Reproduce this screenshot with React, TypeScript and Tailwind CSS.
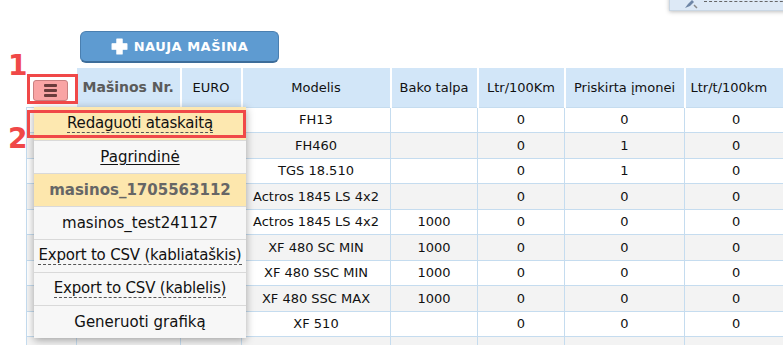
import React from "react";

type Row = {
  model: string;
  tank: string;
  ltr: string;
  company: string;
  ltrT: string;
};

const rows: Row[] = [
  { model: "FH13", tank: "", ltr: "0", company: "0", ltrT: "0" },
  { model: "FH460", tank: "", ltr: "0", company: "1", ltrT: "0" },
  { model: "TGS 18.510", tank: "", ltr: "0", company: "1", ltrT: "0" },
  { model: "Actros 1845 LS 4x2", tank: "", ltr: "0", company: "0", ltrT: "0" },
  { model: "Actros 1845 LS 4x2", tank: "1000", ltr: "0", company: "0", ltrT: "0" },
  { model: "XF 480 SC MIN", tank: "1000", ltr: "0", company: "0", ltrT: "0" },
  { model: "XF 480 SSC MIN", tank: "1000", ltr: "0", company: "0", ltrT: "0" },
  { model: "XF 480 SSC MAX", tank: "1000", ltr: "0", company: "0", ltrT: "0" },
  { model: "XF 510", tank: "", ltr: "0", company: "0", ltrT: "0" },
  { model: "", tank: "", ltr: "", company: "", ltrT: "" },
];

const menuItems = [
  { label: "Redaguoti ataskaitą", kind: "dotted", bg: "bg-[#fde8b0]" },
  { label: "Pagrindinė", kind: "solid", bg: "bg-[#f7f7f7]" },
  { label: "masinos_1705563112", kind: "bold", bg: "bg-[#fde7ad]" },
  { label: "masinos_test241127", kind: "plain", bg: "bg-[#f7f7f7]" },
  { label: "Export to CSV (kabliataškis)", kind: "dotted", bg: "bg-[#f7f7f7]" },
  { label: "Export to CSV (kablelis)", kind: "dotted", bg: "bg-[#f7f7f7]" },
  { label: "Generuoti grafiką", kind: "plain", bg: "bg-[#f7f7f7]" },
];

const App = () => {
  return (
    <div className="relative w-[783px] h-[345px] overflow-hidden bg-white font-['DejaVu_Sans',sans-serif] text-[13px] text-[#111]">
      {/* top right floating panel */}
      <div className="absolute left-[669px] top-[-4px] w-[130px] h-[15px] bg-[#dde9f6] border border-[#c9d6e3] shadow-[0_1px_4px_rgba(0,0,0,0.25)] flex items-center pl-[14px] gap-[6px]">
        <svg width="14" height="10" viewBox="0 0 14 10">
          <path d="M1 9 L4 5 L8 1 L10 3 L6 7 Z" fill="#6f86a6" />
          <path d="M10 6 L13 9" stroke="#8a8a8a" strokeWidth="1.5" />
        </svg>
        <div className="flex-1 border-t border-dashed border-[#666] mt-[-4px]" />
      </div>

      <div className="pt-[31px] pl-[26px]">
        <div className="pl-[54px] h-[37px]">
          <button className="w-[199px] h-[32px] rounded-[6px] bg-[#5e9bd1] border border-[#4a7fb0] border-b-[2px] border-b-[#3d6d9a] flex items-center justify-center gap-[6px] text-white font-bold text-[13px] tracking-[0.5px]">
            <svg width="17" height="17" viewBox="0 0 16 16">
              <path d="M5.5 1h5v4.5H15v5h-4.5V15h-5v-4.5H1v-5h4.5z" fill="#fff" stroke="#fff" strokeLinejoin="round" strokeWidth="1" />
            </svg>
            NAUJA MAŠINA
          </button>
        </div>

        <table className="border-collapse table-fixed w-[800px]">
          <colgroup>
            <col className="w-[50px]" />
            <col className="w-[104px]" />
            <col className="w-[61px]" />
            <col className="w-[149px]" />
            <col className="w-[87px]" />
            <col className="w-[87px]" />
            <col className="w-[120px]" />
            <col className="w-[142px]" />
          </colgroup>
          <thead>
            <tr className="h-[39px]">
              <th className="bg-white"></th>
              <th className="bg-[#d2e6f8] border-r-2 border-white font-bold text-[14px] text-[#5b5b5b] text-left pl-[6px] whitespace-nowrap">Mašinos Nr.</th>
              <th className="bg-[#d2e6f8] border-r-2 border-white font-normal">EURO</th>
              <th className="bg-[#d2e6f8] border-r-2 border-white font-normal">Modelis</th>
              <th className="bg-[#d2e6f8] border-r-2 border-white font-normal">Bako talpa</th>
              <th className="bg-[#d2e6f8] border-r-2 border-white font-normal">Ltr/100Km</th>
              <th className="bg-[#d2e6f8] border-r-2 border-white font-normal whitespace-nowrap">Priskirta įmonei</th>
              <th className="bg-[#d2e6f8] font-normal text-left pl-[5px]">Ltr/t/100km</th>
            </tr>
          </thead>
          <tbody>
            {rows.map((r, i) => (
              <tr key={i} className={`h-[25.5px] ${i % 2 === 1 ? "bg-[#f3f3f3]" : "bg-white"}`}>
                <td className="border border-[#c5dcef]"></td>
                <td className="border border-[#c5dcef]"></td>
                <td className="border border-[#c5dcef]"></td>
                <td className="border border-[#c5dcef] text-center whitespace-nowrap px-0">{r.model}</td>
                <td className="border border-[#c5dcef] text-center">{r.tank}</td>
                <td className="border border-[#c5dcef] text-center">{r.ltr}</td>
                <td className="border border-[#c5dcef] text-center">{r.company}</td>
                <td className="border border-[#c5dcef] text-left pl-[47px]">{r.ltrT}</td>
              </tr>
            ))}
          </tbody>
        </table>
      </div>

      {/* hamburger toggle */}
      <button className="absolute left-[33px] top-[80px] w-[35px] h-[21px] rounded-[3px] bg-[#f9a4a4] border border-[#c98080] flex flex-col items-center justify-center gap-[2px]">
        <span className="block w-[13px] h-[3px] rounded-[1px] bg-[#6a3b3b]" />
        <span className="block w-[13px] h-[3px] rounded-[1px] bg-[#6a3b3b]" />
        <span className="block w-[13px] h-[3px] rounded-[1px] bg-[#6a3b3b]" />
      </button>

      {/* dropdown menu */}
      <div className="absolute left-[34px] top-[107px] w-[212px] bg-[#f7f7f7] rounded-b-[3px] shadow-[0_2px_8px_rgba(0,0,0,0.35)] flex flex-col">
        {menuItems.map((m, i) => (
          <div
            key={i}
            className={`h-[33px] flex items-center justify-center whitespace-nowrap text-[15px] ${m.bg} ${i > 0 ? "border-t border-[#d9d9d9]" : ""}`}
          >
            <span
              className={
                m.kind === "dotted"
                  ? "border-b border-dashed border-[#555] leading-[17px] tracking-[-0.2px]"
                  : m.kind === "solid"
                  ? "underline underline-offset-2"
                  : m.kind === "bold"
                  ? "font-bold text-[#666]"
                  : ""
              }
            >
              {m.label}
            </span>
          </div>
        ))}
      </div>

      {/* annotation boxes */}
      <div className="absolute left-[27px] top-[74px] w-[51px] h-[30px] border-[3px] border-[#f04848]" />
      <div className="absolute left-[27px] top-[110px] w-[219px] h-[28px] border-[3px] border-[#f04848]" />
      <div className="absolute left-[8px] top-[52px] text-[#f04848] font-bold text-[28px] leading-none">1</div>
      <div className="absolute left-[8px] top-[125px] text-[#f04848] font-bold text-[28px] leading-none">2</div>
    </div>
  );
};

export default App;
